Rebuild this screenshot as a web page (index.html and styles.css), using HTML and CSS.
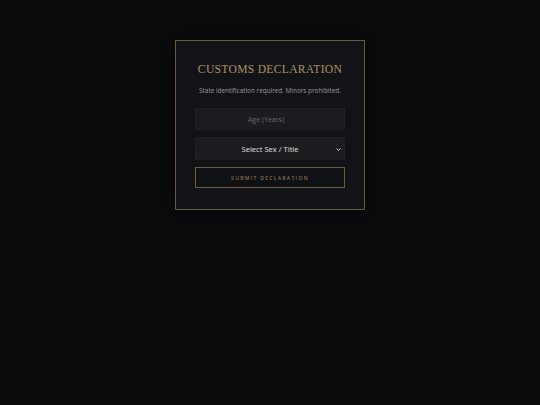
FILE: index.html
```html
<!DOCTYPE html>
<html>
<head>
<meta charset="utf-8">
<link rel="stylesheet" href="styles.css">
</head>
<body>
<div class="card">
  <h1 class="title">Customs Declaration</h1>
  <p class="sub">State identification required. Minors prohibited.</p>
  <form class="form">
    <input class="field" type="text" placeholder="Age (Years)">
    <div class="select">
      <span>Select Sex / Title</span>
      <svg class="chev" width="5" height="3" viewBox="0 0 5 3"><path d="M0.6 0.5 L2.5 2.4 L4.4 0.5" fill="none" stroke="#d8d8d8" stroke-width="1"/></svg>
    </div>
    <button class="btn" type="button">Submit Declaration</button>
  </form>
</div>
</body>
</html>
```
FILE: styles.css
```css
html, body {
  margin: 0;
  padding: 0;
  background: #0b0c0e;
  width: 540px;
  height: 405px;
  overflow: hidden;
}
body {
  display: flex;
  justify-content: center;
  align-items: flex-start;
  padding-top: 40px;
  box-sizing: border-box;
  font-family: "Open Sans", "Liberation Sans", sans-serif;
}
.card {
  width: 190px;
  height: 170px;
  box-sizing: border-box;
  border: 1px solid #6b5b3e;
  background: #121317;
  box-shadow: 0 0 18px 4px rgba(0,0,0,0.6);
  padding: 22px 19px 0;
  display: flex;
  flex-direction: column;
  align-items: center;
}
.title {
  margin: 0;
  font-family: "Liberation Serif", "DejaVu Serif", serif;
  font-weight: normal;
  font-size: 11.6px;
  letter-spacing: 0.3px;
  text-transform: uppercase;
  color: #ad9360;
  line-height: 14px;
  white-space: nowrap;
}
.sub {
  margin: 9px 0 0;
  font-size: 6.4px;
  color: #9a9ca4;
  line-height: 9px;
  white-space: nowrap;
}
.form {
  margin-top: 13px;
  width: 150px;
  display: flex;
  flex-direction: column;
  gap: 7px;
}
.field {
  box-sizing: border-box;
  width: 150px;
  height: 22px;
  margin: 0;
  border: 1px solid #1f2023;
  background: #1b1c1f;
  color: #ddd;
  text-align: center;
  font-family: inherit;
  font-size: 7px;
  outline: none;
  padding: 0 8px 0 0;
}
.field::placeholder {
  color: #6a6b70;
}
.select {
  box-sizing: border-box;
  height: 23px;
  border: 1px solid #1f2023;
  background: #1b1c1f;
  color: #e0e0e0;
  font-size: 7.6px;
  font-weight: 400;
  display: flex;
  align-items: center;
  justify-content: center;
  position: relative;
}
.chev {
  position: absolute;
  right: 3px;
  top: 10px;
}
.btn {
  box-sizing: border-box;
  height: 21px;
  margin: 0;
  border: 1px solid #6b5b3e;
  background: #101115;
  color: #8c7650;
  font-family: inherit;
  font-size: 5px;
  letter-spacing: 1.3px;
  text-transform: uppercase;
  font-weight: 600;
  padding: 0;
}
```
